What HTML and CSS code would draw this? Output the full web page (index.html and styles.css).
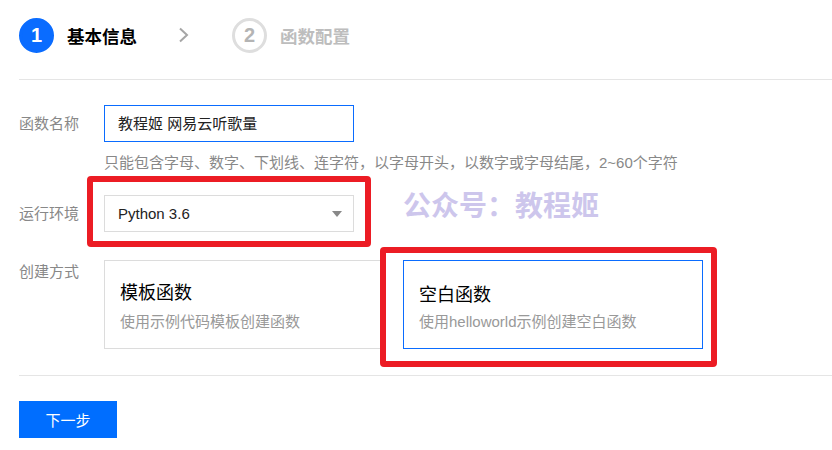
FILE: index.html
```html
<!DOCTYPE html>
<html lang="zh-CN">
<head>
<meta charset="utf-8">
<title>新建函数</title>
<link rel="stylesheet" href="styles.css">
</head>
<body>
<div class="page">
  <div class="steps">
    <div class="step active">
      <span class="step-num">1</span>
      <span class="step-title">基本信息</span>
    </div>
    <svg class="chevron" width="12" height="16" viewBox="0 0 12 16"><path d="M2 1.5 L9 8 L2 14.5" fill="none" stroke="#a6a6a6" stroke-width="2"/></svg>
    <div class="step">
      <span class="step-num">2</span>
      <span class="step-title">函数配置</span>
    </div>
  </div>

  <div class="form">
    <div class="row">
      <div class="label">函数名称</div>
      <div class="field">
        <div class="input">教程姬 网易云听歌量</div>
        <div class="hint">只能包含字母、数字、下划线、连字符，以字母开头，以数字或字母结尾，2~60个字符</div>
      </div>
    </div>
    <div class="row row-select">
      <div class="label">运行环境</div>
      <div class="field">
        <div class="select">
          <span>Python 3.6</span>
          <span class="caret"></span>
        </div>
      </div>
    </div>
    <div class="row row-cards">
      <div class="label label-top">创建方式</div>
      <div class="field cards">
        <div class="card card-template">
          <div class="card-title">模板函数</div>
          <div class="card-desc">使用示例代码模板创建函数</div>
        </div>
        <div class="card card-selected">
          <div class="card-title">空白函数</div>
          <div class="card-desc">使用helloworld示例创建空白函数</div>
        </div>
      </div>
    </div>
  </div>

  <div class="footer">
    <button class="btn-primary">下一步</button>
  </div>

  <div class="watermark">公众号：教程姬</div>
  <div class="annot annot-1"></div>
  <div class="annot annot-2"></div>
</div>
</body>
</html>
```

FILE: styles.css
```css
* { box-sizing: border-box; }

html, body {
  margin: 0;
  padding: 0;
  background: #fff;
}

body {
  font-family: "Liberation Sans", "Noto Sans CJK SC", sans-serif;
  color: #222;
  width: 832px;
  height: 450px;
  overflow: hidden;
}

.page {
  position: relative;
  padding-left: 19px;
  height: 450px;
}

.steps {
  display: flex;
  align-items: center;
  height: 80px;
  padding-bottom: 27px;
  padding-top: 18px;
  border-bottom: 1px solid #e5e5e5;
}

.step {
  display: flex;
  align-items: center;
  gap: 13px;
}

.step-num {
  width: 35px;
  height: 35px;
  border-radius: 50%;
  display: flex;
  align-items: center;
  justify-content: center;
  font-size: 20px;
  font-weight: bold;
  color: #b4b4b4;
  border: 3px solid #dedede;
}

.step.active .step-num {
  background: #0a6cff;
  border-color: #0a6cff;
  color: #fff;
}

.step-title {
  font-size: 17.5px;
  font-weight: bold;
  color: #bdbdbd;
}

.step.active .step-title {
  color: #000;
}

.chevron {
  margin-left: 41px;
  margin-right: 42px;
}

.form {
  padding-top: 25px;
  padding-bottom: 26px;
  border-bottom: 1px solid #e5e5e5;
}

.row {
  display: flex;
}

.label {
  width: 85px;
  flex: none;
  font-size: 15px;
  color: #888;
  line-height: 37px;
}

.label-top {
  line-height: 24px;
}

.input {
  width: 250px;
  height: 37px;
  border: 1px solid #0a6cff;
  padding-left: 13px;
  font-size: 15px;
  line-height: 35px;
  color: #222;
}

.hint {
  margin-top: 11px;
  font-size: 15px;
  line-height: 20px;
  color: #888;
}

.row-select {
  margin-top: 22px;
}

.select {
  width: 250px;
  height: 37px;
  border: 1px solid #dcdcdc;
  padding-left: 13px;
  padding-right: 11px;
  display: flex;
  align-items: center;
  justify-content: space-between;
  font-size: 15px;
  color: #222;
}

.caret {
  width: 0;
  height: 0;
  border-left: 5px solid transparent;
  border-right: 5px solid transparent;
  border-top: 6px solid #888;
}

.row-cards {
  margin-top: 28px;
}

.cards {
  display: flex;
  gap: 19px;
}

.card {
  height: 89px;
  border: 1px solid #dcdcdc;
  padding: 19px 15px 0 15px;
}

.card-template {
  width: 280px;
}

.card-selected {
  width: 300px;
  border-color: #0a6cff;
  padding-top: 21px;
}

.card-title {
  font-size: 18px;
  line-height: 26px;
  color: #000;
}

.card-desc {
  margin-top: 6px;
  font-size: 15px;
  line-height: 20px;
  color: #999;
}

.card-selected .card-desc {
  margin-top: 4px;
}

.footer {
  padding-top: 25px;
}

.btn-primary {
  width: 98px;
  height: 37px;
  border: none;
  background: #006eff;
  color: #fff;
  font-family: "Liberation Sans", "Noto Sans CJK SC", sans-serif;
  font-size: 15px;
  padding: 0;
}

.watermark {
  position: absolute;
  left: 403px;
  top: 186px;
  font-size: 28px;
  font-weight: bold;
  line-height: 36px;
  color: #cdc6ec;
  font-family: "Noto Sans CJK SC", sans-serif;
}

.annot {
  position: absolute;
  border: 6px solid #ec1c24;
  border-radius: 4px;
}

.annot-1 {
  left: 87px;
  top: 176px;
  width: 284px;
  height: 71px;
}

.annot-2 {
  left: 380px;
  top: 247px;
  width: 337px;
  height: 120px;
}
```
